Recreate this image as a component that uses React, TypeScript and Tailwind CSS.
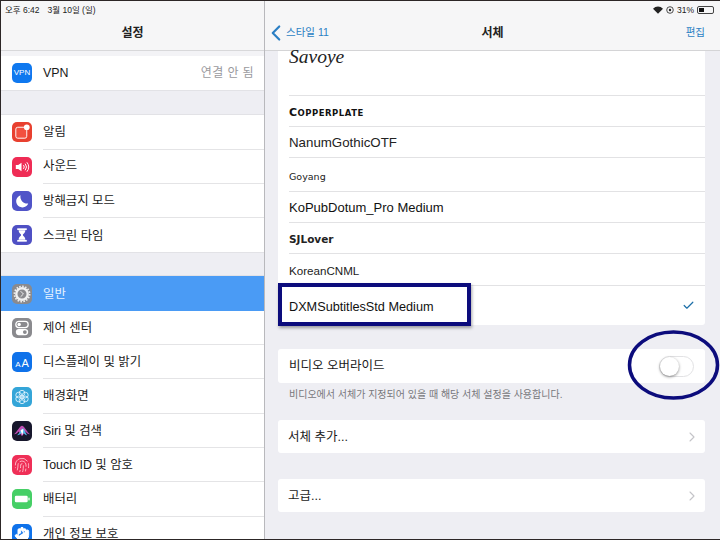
import { Check, ChevronLeft, ChevronRight, Fingerprint, Hand } from "lucide-react";
import type { ReactNode } from "react";

function IconBox({ bg, children }: { bg: string; children: ReactNode }) {
  return (
    <div className={`w-[20px] h-[20px] shrink-0 rounded-[5px] flex items-center justify-center overflow-hidden ${bg}`}>
      {children}
    </div>
  );
}

function SideRow({ icon, label, right, active, last }: { icon: ReactNode; label: string; right?: string; active?: boolean; last?: boolean }) {
  return (
    <div className={`h-[34.3px] shrink-0 flex items-center pl-[11px] ${active ? "bg-[#4a9bf5]" : "bg-white"}`}>
      {icon}
      <div className={`flex-1 h-full ml-[11px] flex items-center pr-[10px] text-[12.4px] ${active ? "text-[#e8f3ff]" : "text-[#1a1a1a]"} ${last || active ? "" : "border-b border-[#e4e4e6]"}`}>
        <span className="flex-1 pt-[1px]">{label}</span>
        {right && <span className="text-[12px] text-[#9a9a9e] tracking-[0.4px]">{right}</span>}
      </div>
    </div>
  );
}

function FontRow({ h, children, check, last }: { h: string; children: ReactNode; check?: boolean; last?: boolean }) {
  return (
    <div className={`${h} shrink-0 flex items-center pr-[10px] ${last ? "" : "border-b border-[#e2e2e4]"}`}>
      <div className="flex-1">{children}</div>
      {check && <Check size={13} strokeWidth={2.2} className="text-[#1d6fa8]" />}
    </div>
  );
}

function LinkCard({ label }: { label: string }) {
  return (
    <div className="h-[33px] rounded-[3px] bg-white flex items-center pl-[10px] pr-[5px] text-[12.5px] text-[#1a1a1a]">
      <span className="flex-1 pt-[1px]">{label}</span>
      <ChevronRight size={16} strokeWidth={1.6} className="text-[#c4c4c8]" />
    </div>
  );
}

export default function App() {
  return (
    <div className="relative w-[720px] h-[540px] overflow-hidden flex border-y border-l border-[#2c2626] bg-[#eeeef3] font-['Liberation_Sans','Noto_Sans_CJK_KR',sans-serif]">
      {/* left pane */}
      <div className="w-[264px] shrink-0 flex flex-col border-r border-[#b8b8bc] overflow-hidden">
        <div className="h-[50px] shrink-0 bg-[#f6f6f7] border-b border-[#d8d8da]">
          <div className="h-[18px] pl-[4px] flex items-center gap-[8px] text-[8.5px] text-[#222]">
            <span>오후 6:42</span>
            <span>3월 10일 (일)</span>
          </div>
          <div className="h-[26px] mt-[1px] text-center text-[12px] font-bold leading-[26px] text-[#222]">설정</div>
        </div>
        <div className="h-[5px] shrink-0 bg-[#f3f3f6]" />
        <div className="border-t border-[#e4e4e6] ml-[42px] -mb-[1px]" />
        <SideRow
          last
          label="VPN"
          right="연결 안 됨"
          icon={
            <IconBox bg="bg-[#0f78ef]">
              <span className="text-[8px] text-white font-medium">VPN</span>
            </IconBox>
          }
        />
        <div className="h-[25px] shrink-0 border-y border-[#e2e2e6] bg-[#eeeef3]" />
        <SideRow
          label="알림"
          icon={
            <IconBox bg="bg-[#e8402f]">
              <svg width="20" height="20" viewBox="0 0 21 21">
                <rect x="4" y="5.5" width="11.5" height="11.5" rx="2" fill="#f2503f" stroke="#fff" strokeWidth="1" />
                <circle cx="15.5" cy="5.5" r="3" fill="#fff" />
              </svg>
            </IconBox>
          }
        />
        <SideRow
          label="사운드"
          icon={
            <IconBox bg="bg-[#ef2c55]">
              <svg width="20" height="20" viewBox="0 0 21 21" fill="none" stroke="#fff" strokeWidth="1">
                <path d="M4 8.5h2.5L10 6v9l-3.5-2.5H4z" fill="#fff" stroke="none" />
                <path d="M12 8.5a3 3 0 0 1 0 4M13.8 7a5.5 5.5 0 0 1 0 7M15.6 5.5a8 8 0 0 1 0 10" />
              </svg>
            </IconBox>
          }
        />
        <SideRow
          label="방해금지 모드"
          icon={
            <IconBox bg="bg-[#5054c8]">
              <svg width="20" height="20" viewBox="0 0 21 21">
                <path d="M9 4.5a6.5 6.5 0 1 0 8 8.5A7 7 0 0 1 9 4.5z" fill="#fff" />
              </svg>
            </IconBox>
          }
        />
        <SideRow
          last
          label="스크린 타임"
          icon={
            <IconBox bg="bg-[#4f50c4]">
              <svg width="20" height="20" viewBox="0 0 21 21" fill="#fff">
                <rect x="5.5" y="3.5" width="10" height="1.8" />
                <rect x="5.5" y="15.7" width="10" height="1.8" />
                <path d="M7 5.5h7c0 3-2.3 3.6-2.6 5 .3 1.4 2.6 2 2.6 5H7c0-3 2.3-3.6 2.6-5C9.3 9.1 7 8.5 7 5.5z" />
              </svg>
            </IconBox>
          }
        />
        <div className="h-[24px] shrink-0 border-y border-[#e2e2e6] bg-[#eeeef3]" />
        <SideRow
          active
          label="일반"
          icon={
            <IconBox bg="bg-[#8a8a8e]">
              <svg width="20" height="20" viewBox="0 0 21 21" fill="none" stroke="#f1f1f1">
                <circle cx="10.5" cy="10.5" r="6" strokeWidth="2.5" />
                <circle cx="10.5" cy="10.5" r="8" strokeWidth="1.8" strokeDasharray="1.6 1.54" />
                <path d="M9 7.5l3 3-3 3" strokeWidth="1" />
              </svg>
            </IconBox>
          }
        />
        <SideRow
          label="제어 센터"
          icon={
            <IconBox bg="bg-[#8a8a8e]">
              <svg width="20" height="20" viewBox="0 0 21 21">
                <rect x="4" y="3.5" width="13" height="6.5" rx="3.25" fill="none" stroke="#fff" strokeWidth="1.3" />
                <circle cx="7.5" cy="6.75" r="1.8" fill="#fff" />
                <rect x="4" y="11.5" width="13" height="6.5" rx="3.25" fill="#fff" />
                <circle cx="13.5" cy="14.75" r="2" fill="#8a8a8e" />
              </svg>
            </IconBox>
          }
        />
        <SideRow
          label="디스플레이 및 밝기"
          icon={
            <IconBox bg="bg-[#0f72ea]">
              <span className="text-white leading-none font-['Liberation_Sans',sans-serif]">
                <span className="text-[8px]">A</span>
                <span className="text-[11px] ml-[1px]">A</span>
              </span>
            </IconBox>
          }
        />
        <SideRow
          label="배경화면"
          icon={
            <IconBox bg="bg-[#34a5d8]">
              <svg width="20" height="20" viewBox="0 0 21 21" fill="none" stroke="#e6f6ff" strokeWidth="0.9">
                <circle cx="10.5" cy="6.5" r="3" />
                <circle cx="10.5" cy="14.5" r="3" />
                <circle cx="7" cy="8.5" r="3" />
                <circle cx="14" cy="8.5" r="3" />
                <circle cx="7" cy="12.5" r="3" />
                <circle cx="14" cy="12.5" r="3" />
              </svg>
            </IconBox>
          }
        />
        <SideRow
          label="Siri 및 검색"
          icon={
            <IconBox bg="bg-[#17172c]">
              <svg width="20" height="20" viewBox="0 0 21 21">
                <path d="M2 14C6 11 8 5 10.5 5S15 11 19 14c-3 0-4-2-5-3l-3.5 5L7 11c-1 1-2 3-5 3z" fill="#c04fb5" />
                <path d="M5 15c3-1 4-6 6-7s3 5 5 7c-2 0-4-3-5-3s-3 3-6 3z" fill="#52b4e6" />
                <path d="M9 10c1-1 2-2 3-1l-1 6z" fill="#fff" />
              </svg>
            </IconBox>
          }
        />
        <SideRow
          label="Touch ID 및 암호"
          icon={
            <IconBox bg="bg-[#ef2f57]">
              <Fingerprint size={16} strokeWidth={1.3} className="text-[#ffc8d2]" />
            </IconBox>
          }
        />
        <SideRow
          label="배터리"
          icon={
            <IconBox bg="bg-[#46cf66]">
              <svg width="20" height="20" viewBox="0 0 21 21" fill="#fff">
                <rect x="3" y="7" width="13.5" height="7" rx="1.5" />
                <rect x="17.2" y="9" width="1.3" height="3" rx="0.5" />
              </svg>
            </IconBox>
          }
        />
        <SideRow
          last
          label="개인 정보 보호"
          icon={
            <IconBox bg="bg-[#0f72ea]">
              <Hand size={16} strokeWidth={1.5} fill="#fff" className="text-white" />
            </IconBox>
          }
        />
      </div>

      {/* right pane */}
      <div className="flex-1 flex flex-col overflow-hidden">
        <div className="h-[50px] shrink-0 bg-[#f6f6f7] border-b border-[#d4d4d6]">
          <div className="h-[18px] pr-[5px] flex items-center justify-end gap-[3px] text-[8.5px] text-[#222]">
            <svg width="10" height="8" viewBox="0 0 11 8">
              <path d="M5.5 8L0 2.5a7.8 7.8 0 0 1 11 0z" fill="#222" />
            </svg>
            <svg width="8" height="8" viewBox="0 0 8 8" fill="none" stroke="#222">
              <circle cx="4" cy="4" r="3.3" strokeWidth="0.8" />
              <circle cx="4" cy="4" r="1.2" fill="#222" strokeWidth="0" />
            </svg>
            <span>31%</span>
            <div className="w-[17px] h-[8px] border border-[#444] rounded-[2px] p-[1px] mr-[1px]">
              <div className="w-[5px] h-full bg-[#111]" />
            </div>
          </div>
          <div className="h-[26px] mt-[1px] flex items-center px-[5px]">
            <div className="flex-1 flex items-center text-[#2b7fc4] text-[10.5px]">
              <ChevronLeft size={26} strokeWidth={2} className="-ml-[7px] -mr-[3px]" />
              <span>스타일 11</span>
            </div>
            <div className="text-[12px] font-bold text-[#222]">서체</div>
            <div className="flex-1 text-right text-[10.5px] text-[#2b7fc4]">
              <span className="mr-[10px]">편집</span>
            </div>
          </div>
        </div>

        <div className="flex-1 pl-[13px] pr-[15px] min-h-0">
          <div className="rounded-b-[3px] bg-white pl-[11px]">
            <FontRow h="h-[45px]">
              <div className="h-[45px] overflow-hidden -mt-[15px]">
                <span className="font-['Liberation_Serif',serif] italic text-[19.5px] leading-[28px] text-[#222]">Savoye</span>
              </div>
            </FontRow>
            <FontRow h="h-[31px]">
              <span className="font-['DejaVu_Sans',sans-serif] font-bold tracking-[0.5px] text-[#111]">
                <span className="text-[11px]">C</span>
                <span className="text-[8.5px]">OPPERPLATE</span>
              </span>
            </FontRow>
            <FontRow h="h-[31px]">
              <span className="text-[13.3px] text-[#222]">NanumGothicOTF</span>
            </FontRow>
            <FontRow h="h-[34px]">
              <span className="font-['DejaVu_Sans',sans-serif] text-[9.5px] text-[#222]">Goyang</span>
            </FontRow>
            <FontRow h="h-[31px]">
              <span className="text-[13px] text-[#111]">KoPubDotum_Pro Medium</span>
            </FontRow>
            <FontRow h="h-[31px]">
              <span className="font-['DejaVu_Sans',sans-serif] font-bold text-[10.5px] text-[#222]">SJLover</span>
            </FontRow>
            <FontRow h="h-[32px]">
              <span className="text-[11.6px] text-[#222]">KoreanCNML</span>
            </FontRow>
            <FontRow h="h-[39px]" check last>
              <span className="text-[12.7px] text-[#111]">DXMSubtitlesStd Medium</span>
            </FontRow>
          </div>

          <div className="mt-[24px] h-[34px] rounded-[3px] bg-white flex items-center pl-[11px] pr-[11px] text-[12.5px] text-[#1a1a1a]">
            <span className="flex-1 pt-[1px]">비디오 오버라이드</span>
            <div className="w-[35px] h-[21px] rounded-full border border-[#e2e2e4] bg-white relative">
              <div className="absolute left-0 top-0 w-[19px] h-[19px] rounded-full bg-white shadow-[0_1px_3px_rgba(0,0,0,0.45)]" />
            </div>
          </div>
          <div className="h-[37px] pt-[5px] pl-[11px] text-[10px] leading-[14px] text-[#77777b]">
            비디오에서 서체가 지정되어 있을 때 해당 서체 설정을 사용합니다.
          </div>
          <LinkCard label="서체 추가..." />
          <div className="h-[26px]" />
          <LinkCard label="고급..." />
        </div>
      </div>

      {/* annotations drawn over the screenshot */}
      <div className="absolute left-[277px] top-[282px] w-[193px] h-[43px] border-[4px] border-[#0c0c7c] shadow-[1px_2px_3px_rgba(0,0,0,0.35)]" />
      <svg className="absolute left-[625px] top-[328px]" width="95" height="74" viewBox="0 0 95 74" fill="none">
        <ellipse cx="47.5" cy="36" rx="44" ry="33" stroke="#0c0c7c" strokeWidth="3.5" />
      </svg>
    </div>
  );
}
